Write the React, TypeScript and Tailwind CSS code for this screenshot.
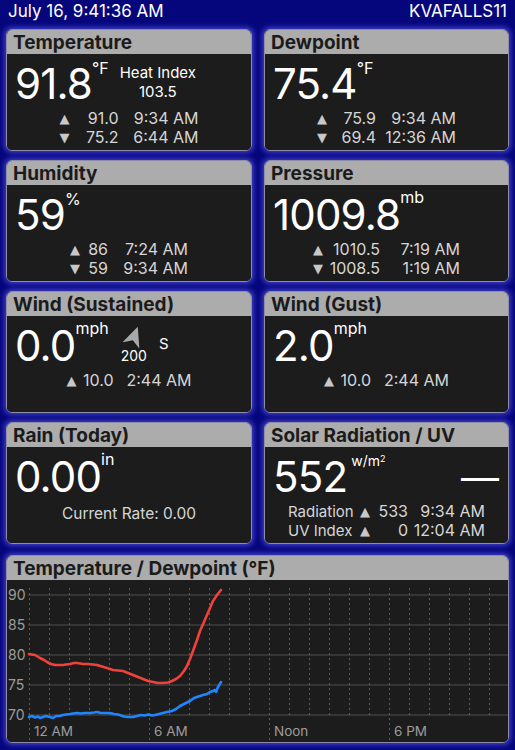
import React from 'react';

type StatRow = { label?: string; dir: 'up' | 'down'; num: string; time: string };

const Card: React.FC<{ title: string; className?: string; children: React.ReactNode }> = ({ title, className, children }) => (
  <div
    className={`flex flex-col rounded-[6px] border border-[#8d8da6] overflow-hidden shadow-[0_0_5px_2px_rgba(70,70,210,0.85)] ${className ?? 'h-[122px]'}`}
  >
    <div className="h-[24px] shrink-0 bg-[#acacac] px-[6px] text-[19px] font-bold leading-[25px] text-[#1b1b1b]">{title}</div>
    <div className="flex-1 bg-[#1c1c1c]">{children}</div>
  </div>
);

const BigValue: React.FC<{ value: string; unit: React.ReactNode; unitClass?: string; children?: React.ReactNode }> = ({
  value,
  unit,
  unitClass,
  children,
}) => (
  <div className="flex h-[51px] items-start pl-[8px] pr-[9px] pt-[9px]">
    <span className="text-[42px] leading-none tracking-[-0.02em]">{value}</span>
    <span className={`leading-none ${unitClass ?? 'mt-[-3px] text-[16px]'}`}>{unit}</span>
    {children}
  </div>
);

const Stats: React.FC<{ rows: StatRow[]; numW: number; timeW?: number; labelW?: number }> = ({ rows, numW, timeW = 80, labelW }) => (
  <div className="mt-[4px] flex flex-col items-center text-[16px] leading-[19px] text-[#d6d6d6]">
    {rows.map((r, i) => (
      <div key={i} className="flex items-center whitespace-nowrap">
        {labelW ? (
          <span className="mr-[8px] text-right text-[15px]" style={{ width: labelW }}>
            {r.label}
          </span>
        ) : null}
        <span className="w-[11px] text-[13px] leading-[19px] text-[#c8c8c8] font-['DejaVu_Sans',sans-serif]">
          {r.dir === 'up' ? '▲' : '▼'}
        </span>
        <span className="text-right" style={{ width: numW }}>
          {r.num}
        </span>
        <span className="text-right" style={{ width: timeW }}>
          {r.time}
        </span>
      </div>
    ))}
  </div>
);

const WindArrow: React.FC = () => (
  <svg width="22" height="23" viewBox="0 0 22 23">
    <polygon points="11,1 20,21 11,15.5 2,21" fill="#a8a8a8" transform="rotate(20 11 12)" />
  </svg>
);

// chart data, page coordinates
const tempPts: [number, number][] = [
  [29, 656], [35, 657], [40, 660], [44, 662], [47, 664], [51, 666], [55, 667], [59, 667], [63, 667], [66, 666.5],
  [70, 666], [74, 665], [77, 665], [80, 665.5], [83, 666], [88, 666], [93, 666.5], [97, 667], [102, 668.5], [107, 670],
  [110, 671], [113, 672], [118, 672.5], [123, 673], [128, 675], [133, 677], [138, 679], [143, 681], [148, 683], [153, 684],
  [158, 685], [163, 685], [168, 684.5], [172, 683], [176, 681], [180, 678], [184, 673], [187, 668], [190, 661], [193, 653],
  [197, 642], [200, 633], [204, 624], [207, 617], [210, 610], [213, 603], [217, 597], [221, 592],
];
const dewPts: [number, number][] = [
  [29, 719], [32, 718], [35, 719.5], [38, 718.5], [40, 720], [43, 719], [46, 718], [50, 719], [53, 720], [56, 718],
  [60, 718], [63, 717], [66, 716.5], [70, 716], [73, 715.5], [77, 715], [81, 715.5], [85, 715], [90, 715], [94, 714.5],
  [97, 714], [101, 715], [105, 715], [110, 715], [114, 716], [118, 716.5], [121, 717.5], [124, 718.5], [128, 719], [133, 719],
  [137, 718], [141, 717], [145, 717.5], [148, 716.5], [152, 717.5], [155, 717], [159, 716], [163, 715], [167, 714], [172, 713],
  [176, 711], [180, 708], [185, 705.5], [190, 703], [194, 700], [197, 699], [200, 698], [203, 697], [207, 696], [210, 694],
  [213, 693], [215, 692], [216, 694], [218, 689], [221, 684],
];

const OX = 7;
const OY = 582;
const toPath = (pts: [number, number][]) => pts.map(([x, y], i) => `${i ? 'L' : 'M'}${x - OX} ${y - OY}`).join(' ');

const Chart: React.FC = () => {
  const hLines = [597, 627, 657, 687, 717];
  const yLabels = ['90', '85', '80', '75', '70'];
  const hours = Array.from({ length: 24 }, (_, k) => k);
  const xLabels: [number, string][] = [[0, '12 AM'], [6, '6 AM'], [12, 'Noon'], [18, '6 PM']];
  return (
    <svg width="501" height="160" viewBox="0 0 501 160" className="block font-['Inter',sans-serif]">
      {hLines.map((y) => (
        <line key={y} x1={28 - OX} x2={509 - OX} y1={y - OY} y2={y - OY} stroke="#4e4e4e" strokeWidth="1" />
      ))}
      {hours.map((k) => {
        const x = 29 + 20 * k - OX + 0.5;
        const major = k % 6 === 0;
        return (
          <line key={k} x1={x} x2={x} y1={590 - OY} y2={(major ? 743 : 718) - OY} stroke="#5c5c5c" strokeWidth="1" strokeDasharray="2 3" />
        );
      })}
      {yLabels.map((t, i) => (
        <text key={t} x={8 - OX} y={hLines[i] - OY + 5} fontSize="14" fill="#9c9c9c">
          {t}
        </text>
      ))}
      {xLabels.map(([h, t]) => (
        <text key={t} x={29 + 20 * h - OX + 5} y={738 - OY} fontSize="13.5" fill="#9c9c9c">
          {t}
        </text>
      ))}
      <path d={toPath(tempPts)} fill="none" stroke="#f0423a" strokeWidth="2.6" strokeLinejoin="round" strokeLinecap="round" />
      <path d={toPath(dewPts)} fill="none" stroke="#1f86ff" strokeWidth="2.6" strokeLinejoin="round" strokeLinecap="round" />
    </svg>
  );
};

const App: React.FC = () => {
  return (
    <div className="h-[750px] w-[515px] overflow-hidden bg-[#06067c] font-['Inter','Liberation_Sans',sans-serif] text-white">
      <div className="flex h-[22px] items-center justify-between px-[8px] text-[17px] leading-none">
        <span>July 16, 9:41:36 AM</span>
        <span>KVAFALLS11</span>
      </div>

      <div className="mt-[7px] grid grid-cols-[246px_245px] gap-x-[12px] gap-y-[9px] px-[6px]">
        <Card title="Temperature">
          <BigValue value="91.8" unit="°F">
            <div className="ml-[11px] flex flex-col items-center text-[15px] leading-[19px]">
              <span>Heat Index</span>
              <span>103.5</span>
            </div>
          </BigValue>
          <Stats
            numW={48}
            rows={[
              { dir: 'up', num: '91.0', time: '9:34 AM' },
              { dir: 'down', num: '75.2', time: '6:44 AM' },
            ]}
          />
        </Card>

        <Card title="Dewpoint">
          <BigValue value="75.4" unit="°F" />
          <Stats
            numW={48}
            rows={[
              { dir: 'up', num: '75.9', time: '9:34 AM' },
              { dir: 'down', num: '69.4', time: '12:36 AM' },
            ]}
          />
        </Card>

        <Card title="Humidity">
          <BigValue value="59" unit="%" />
          <Stats
            numW={27}
            rows={[
              { dir: 'up', num: '86', time: '7:24 AM' },
              { dir: 'down', num: '59', time: '9:34 AM' },
            ]}
          />
        </Card>

        <Card title="Pressure">
          <BigValue value="1009.8" unit="mb" unitClass="mt-[-5px] text-[16px]" />
          <Stats
            numW={56}
            rows={[
              { dir: 'up', num: '1010.5', time: '7:19 AM' },
              { dir: 'down', num: '1008.5', time: '1:19 AM' },
            ]}
          />
        </Card>

        <Card title="Wind (Sustained)">
          <BigValue value="0.0" unit="mph" unitClass="mt-[-5px] text-[16px]">
            <div className="ml-[12px] flex flex-col items-center">
              <WindArrow />
              <span className="text-[14px] leading-[15px]">200</span>
            </div>
            <span className="ml-[12px] mt-[10px] text-[15px] leading-[18px]">S</span>
          </BigValue>
          <Stats numW={36} timeW={78} rows={[{ dir: 'up', num: '10.0', time: '2:44 AM' }]} />
        </Card>

        <Card title="Wind (Gust)">
          <BigValue value="2.0" unit="mph" unitClass="mt-[-5px] text-[16px]" />
          <Stats numW={36} timeW={78} rows={[{ dir: 'up', num: '10.0', time: '2:44 AM' }]} />
        </Card>

        <Card title="Rain (Today)">
          <BigValue value="0.00" unit="in" unitClass="mt-[-5px] text-[16px]" />
          <div className="mt-[6px] text-center text-[15.5px] leading-[19px] text-[#d6d6d6]">Current Rate: 0.00</div>
        </Card>

        <Card title="Solar Radiation / UV">
          <BigValue
            value="552"
            unit={
              <>
                w/m<sup className="text-[9px]">2</sup>
              </>
            }
            unitClass="mt-[-2px] ml-[4px] text-[14px]"
          >
            <span className="ml-auto mt-[2px] text-[38px] leading-none">—</span>
          </BigValue>
          <Stats
            labelW={64}
            numW={37}
            timeW={77}
            rows={[
              { label: 'Radiation', dir: 'up', num: '533', time: '9:34 AM' },
              { label: 'UV Index', dir: 'up', num: '0', time: '12:04 AM' },
            ]}
          />
        </Card>
      </div>

      <div className="mx-[6px] mt-[11px]">
        <Card title="Temperature / Dewpoint (°F)" className="h-[188px]">
          <Chart />
        </Card>
      </div>
    </div>
  );
};

export default App;
